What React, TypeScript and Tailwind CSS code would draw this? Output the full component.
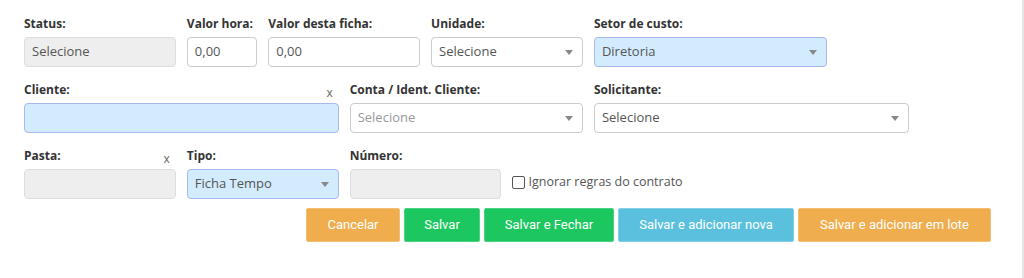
import React from 'react';

type Tone = 'white' | 'gray' | 'blue';

const toneClass: Record<Tone, string> = {
  white: 'bg-white border-[#cccccc]',
  gray: 'bg-[#eeeeee] border-[#dddddd]',
  blue: 'bg-[#d2ebfd] border-[#a9b8ee]',
};

const Label: React.FC<{ text: string; clear?: boolean }> = ({ text, clear }) => (
  <div className="flex h-[18px] items-center justify-between pr-[6px] mb-[4px]">
    <span className="whitespace-nowrap text-[12px] font-bold text-[#333333] leading-[18px]">{text}</span>
    {clear && <span className="text-[12px] text-[#666666] leading-none pt-[6px]">x</span>}
  </div>
);

const Caret = () => (
  <svg width="8" height="5" viewBox="0 0 8 5" className="shrink-0">
    <path d="M0 0h8L4 5z" fill="#888888" />
  </svg>
);

interface FieldProps {
  label: string;
  span: string;
  tone?: Tone;
  value?: string;
  placeholder?: boolean;
  select?: boolean;
  clear?: boolean;
}

const Field: React.FC<FieldProps> = ({ label, span, tone = 'white', value, placeholder, select, clear }) => (
  <div className={span}>
    <Label text={label} clear={clear} />
    <div
      className={`flex h-[30px] items-center justify-between rounded-[4px] border pl-[7px] pr-[9px] text-[13px] ${toneClass[tone]} ${
        placeholder ? 'text-[#999999]' : 'text-[#555555]'
      }`}
    >
      <span>{value}</span>
      {select && <Caret />}
    </div>
  </div>
);

const Button: React.FC<{ text: string; color: string; width: string }> = ({ text, color, width }) => (
  <button
    className={`flex h-[34px] items-center justify-center rounded-[2px] border text-[13px] text-white ${color} ${width}`}
    style={{ fontFamily: 'Roboto, sans-serif' }}
  >
    {text}
  </button>
);

export default function App() {
  return (
    <div
      className="h-[278px] w-[1024px] border-r-2 border-[#e6e6e6] bg-white pt-[15px]"
      style={{ fontFamily: '"Open Sans", sans-serif' }}
    >
      <div className="ml-[24px] grid w-[966px] grid-cols-12 gap-x-[11px] gap-y-[14px]">
        {/* linha 1 */}
        <Field label="Status:" span="col-span-2" tone="gray" value="Selecione" />
        <Field label="Valor hora:" span="col-span-1" value="0,00" />
        <Field label="Valor desta ficha:" span="col-span-2" value="0,00" />
        <Field label="Unidade:" span="col-span-2" value="Selecione" select />
        <Field label="Setor de custo:" span="col-span-3" tone="blue" value="Diretoria" select />
        <div className="col-span-2" />

        {/* linha 2 */}
        <Field label="Cliente:" span="col-span-4" tone="blue" clear />
        <Field label="Conta / Ident. Cliente:" span="col-span-3" value="Selecione" placeholder select />
        <Field label="Solicitante:" span="col-span-4" value="Selecione" select />
        <div className="col-span-1" />

        {/* linha 3 */}
        <Field label="Pasta:" span="col-span-2" tone="gray" clear />
        <Field label="Tipo:" span="col-span-2" tone="blue" value="Ficha Tempo" select />
        <Field label="Número:" span="col-span-2" tone="gray" />
        <div className="col-span-4 flex items-end pb-[7px]">
          <label className="flex items-center gap-[3px] text-[12.5px] text-[#555555]">
            <span className="h-[13px] w-[13px] rounded-[2px] border border-[#555555] bg-white" />
            Ignorar regras do contrato
          </label>
        </div>
      </div>

      <div className="ml-[25px] mt-[9px] flex w-[966px] justify-end gap-[4px]">
        <Button text="Cancelar" color="bg-[#f0ad4e] border-[#f3bd72]" width="w-[94px]" />
        <Button text="Salvar" color="bg-[#1cc760] border-[#4cd283]" width="w-[76px]" />
        <Button text="Salvar e Fechar" color="bg-[#1cc760] border-[#4cd283]" width="w-[130px]" />
        <Button text="Salvar e adicionar nova" color="bg-[#5bc0de] border-[#85d0e6]" width="w-[176px]" />
        <Button text="Salvar e adicionar em lote" color="bg-[#f0ad4e] border-[#f3bd72]" width="w-[193px]" />
      </div>
    </div>
  );
}
